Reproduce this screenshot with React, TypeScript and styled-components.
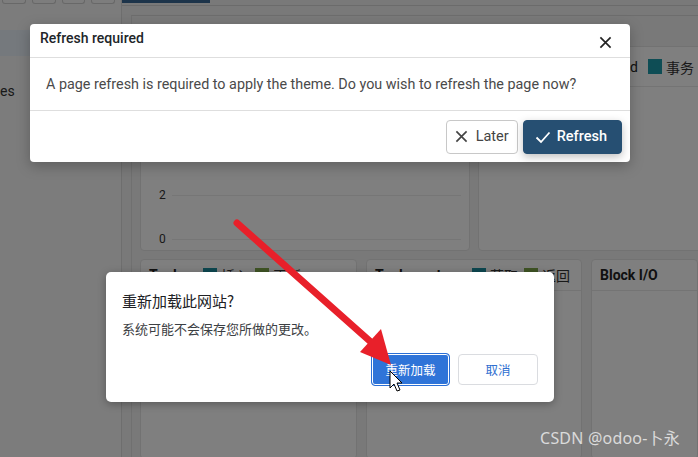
import React from "react";
import styled, { createGlobalStyle } from "styled-components";

const Global = createGlobalStyle`
  html, body { margin: 0; padding: 0; }
  body { font-family: Roboto, "Noto Sans", sans-serif; background: #7c7c7c; }
`;

const Screen = styled.div`
  position: relative;
  width: 698px;
  height: 457px;
  overflow: hidden;
  display: flex;
  background: #f2f2f2;
`;

const Sidebar = styled.aside`
  width: 121px;
  flex-shrink: 0;
  background: #f8f8f8;
  border-right: 1px solid #dcdcdc;
  display: flex;
  flex-direction: column;
`;

const TabRow = styled.div`
  display: flex;
  gap: 6px;
  padding: 0 6px 0 2px;
  height: 30px;
`;

const TabStub = styled.div`
  width: 23px;
  height: 3px;
  border: 1px solid #d0d0d0;
  border-top: none;
  border-radius: 0 0 3px 3px;
  background: #fafafa;
`;

const NavItem = styled.div<{ active?: boolean }>`
  height: ${(p) => (p.active ? 26 : 42)}px;
  display: flex;
  align-items: flex-end;
  font-size: 14px;
  color: #333;
  background: ${(p) => (p.active ? "#eaf3fb" : "transparent")};
  line-height: 1;
`;

const Main = styled.main`
  flex: 1;
  display: flex;
  flex-direction: column;
  min-width: 0;
`;

const TopStrip = styled.div`
  height: 5px;
  flex-shrink: 0;
  border-bottom: 1px solid #d6d6d6;
  display: flex;
`;

const ActiveTab = styled.div`
  width: 88px;
  height: 3px;
  background: #3b6894;
`;

const Content = styled.div`
  flex: 1;
  padding: 9px 0 0 9px;
  display: flex;
  min-width: 0;
`;

const Board = styled.div`
  flex: 1;
  min-width: 0;
  border-left: 1px solid #e0e0e0;
  border-top: 1px solid #dadada;
  padding: 30px 0 0 8px;
  display: flex;
  flex-direction: column;
  gap: 8px;
`;

const BoardRow = styled.div<{ h: number; gap: number }>`
  height: ${(p) => p.h}px;
  flex-shrink: 0;
  display: flex;
  gap: ${(p) => p.gap}px;
`;

const Panel = styled.section<{ w?: number }>`
  ${(p) => (p.w ? `width: ${p.w}px; flex-shrink: 0;` : "flex: 1; min-width: 0;")}
  box-sizing: border-box;
  background: #ffffff;
  border: 1px solid #e4e4e4;
  border-radius: 4px;
  display: flex;
  flex-direction: column;
  overflow: hidden;
`;

const PanelHead = styled.div<{ h?: number }>`
  height: ${(p) => p.h ?? 30}px;
  flex-shrink: 0;
  display: flex;
  align-items: center;
  gap: 4px;
  padding: 0 9px 0 8px;
  border-bottom: 1px solid #e8e8e8;
  white-space: nowrap;
  font-size: 14px;
  color: #222;
`;

const PanelTitle = styled.span<{ gapAfter?: number }>`
  font-weight: 700;
  margin-right: ${(p) => (p.gapAfter !== undefined ? `${p.gapAfter}px` : "auto")};
`;

const Swatch = styled.span<{ color: string }>`
  width: 14px;
  height: 15px;
  flex-shrink: 0;
  background: ${(p) => p.color};
  display: inline-block;
`;

const LegendText = styled.span`
  font-family: "Noto Sans CJK SC", sans-serif;
  font-size: 14px;
  color: #333;
  margin-right: 2px;
`;

const Chart = styled.div`
  flex: 1;
  display: flex;
  flex-direction: column;
  justify-content: flex-end;
  gap: 30px;
  padding: 0 8px 4px 18px;
`;

const Tick = styled.div`
  display: flex;
  align-items: center;
  gap: 6px;
  font-size: 12px;
  color: #333;
  &::after {
    content: "";
    flex: 1;
    height: 1px;
    background: #ececec;
  }
`;

const Backdrop = styled.div`
  position: absolute;
  inset: 0;
  background: rgba(0, 0, 0, 0.5);
`;

const Modal = styled.div`
  position: absolute;
  left: 30px;
  top: 24px;
  width: 600px;
  background: #fff;
  border-radius: 4px;
  box-shadow: 0 4px 14px rgba(0, 0, 0, 0.25);
  font-family: Roboto, sans-serif;
`;

const ModalHead = styled.div`
  height: 34px;
  box-sizing: border-box;
  display: flex;
  align-items: flex-start;
  justify-content: space-between;
  padding: 6px 18px 0 10px;
  border-bottom: 1px solid #dedede;
`;

const ModalTitle = styled.h4`
  margin: 0;
  font-size: 14px;
  line-height: 17px;
  font-weight: 500;
  color: #212529;
`;

const CloseBtn = styled.button`
  border: 0;
  background: none;
  padding: 0;
  margin-top: 6px;
  display: flex;
  color: #222;
`;

const ModalBody = styled.div`
  height: 52px;
  display: flex;
  align-items: center;
  padding: 0 16px;
  font-size: 14.35px;
  color: #4a4a4a;
  border-bottom: 1px solid #dedede;
`;

const ModalFoot = styled.div`
  height: 51px;
  display: flex;
  align-items: center;
  justify-content: flex-end;
  gap: 5px;
  padding: 0 8px;
`;

const FootBtn = styled.button<{ primary?: boolean }>`
  height: 34px;
  display: flex;
  align-items: center;
  justify-content: center;
  gap: ${(p) => (p.primary ? 6 : 8)}px;
  padding: 0 ${(p) => (p.primary ? 14 : 8)}px 0 ${(p) => (p.primary ? 11 : 8)}px;
  border-radius: 4px;
  font-family: Roboto, sans-serif;
  font-size: 14.5px;
  font-weight: ${(p) => (p.primary ? 500 : 400)};
  color: ${(p) => (p.primary ? "#fff" : "#444")};
  background: ${(p) => (p.primary ? "#264f72" : "#fff")};
  border: 1px solid ${(p) => (p.primary ? "#264f72" : "#c8c8c8")};
  box-shadow: ${(p) => (p.primary ? "0 3px 8px rgba(0,0,0,0.25)" : "none")};
`;

const Prompt = styled.div`
  position: absolute;
  left: 106px;
  top: 272px;
  width: 448px;
  height: 130px;
  box-sizing: border-box;
  background: #fff;
  border-radius: 5px;
  box-shadow: 0 2px 8px rgba(0, 0, 0, 0.3);
  padding: 19px 16px 0 16px;
  font-family: "Noto Sans CJK SC", "Noto Sans", sans-serif;
  display: flex;
  flex-direction: column;
`;

const PromptTitle = styled.div`
  font-size: 15px;
  line-height: 20px;
  color: #202124;
`;

const PromptText = styled.div`
  margin-top: 9px;
  font-size: 13px;
  line-height: 17px;
  color: #3c4043;
`;

const PromptActions = styled.div`
  margin-top: 16px;
  display: flex;
  justify-content: flex-end;
  align-items: center;
  gap: 8px;
`;

const ChromeBtn = styled.button<{ primary?: boolean }>`
  width: ${(p) => (p.primary ? 79 : 80)}px;
  height: ${(p) => (p.primary ? 33 : 31)}px;
  border-radius: 4px;
  font-family: "Noto Sans CJK SC", sans-serif;
  font-size: 12.5px;
  color: ${(p) => (p.primary ? "#fff" : "#2f6fd0")};
  background: ${(p) => (p.primary ? "#2f74d8" : "#fff")};
  border: 1px solid ${(p) => (p.primary ? "#2a6fd6" : "#dadce0")};
  box-shadow: ${(p) => (p.primary ? "inset 0 0 0 1px #fff" : "none")};
`;

const Annotation = styled.svg`
  position: absolute;
  inset: 0;
  pointer-events: none;
`;

const Watermark = styled.div`
  position: absolute;
  right: 18px;
  bottom: 8px;
  font-family: "Noto Sans", "Noto Sans CJK SC", sans-serif;
  font-size: 16px;
  color: rgba(255, 255, 255, 0.72);
  letter-spacing: 0.2px;
`;

const XIcon = ({ size = 14 }: { size?: number }) => (
  <svg width={size} height={size} viewBox="0 0 14 14">
    <path d="M1.5 1.5 L12.5 12.5 M12.5 1.5 L1.5 12.5" stroke="currentColor" strokeWidth="1.8" fill="none" />
  </svg>
);

const CheckIcon = () => (
  <svg width="16" height="14" viewBox="0 0 16 14">
    <path d="M1.5 7.5 L6 12 L14.5 2.5" stroke="currentColor" strokeWidth="1.8" fill="none" />
  </svg>
);

export default function App() {
  return (
    <>
      <Global />
      <Screen>
        <Sidebar>
          <TabRow>
            <TabStub />
            <TabStub />
            <TabStub />
            <TabStub />
          </TabRow>
          <NavItem active />
          <NavItem>es</NavItem>
        </Sidebar>
        <Main>
          <TopStrip>
            <ActiveTab />
          </TopStrip>
          <Content>
            <Board>
              <BoardRow h={205} gap={8}>
                <Panel w={330}>
                  <PanelHead>
                    <PanelTitle>Sessions</PanelTitle>
                  </PanelHead>
                  <Chart>
                    <Tick>2</Tick>
                    <Tick>0</Tick>
                  </Chart>
                </Panel>
                <Panel w={228}>
                  <PanelHead h={39}>
                    <PanelTitle>Transactions</PanelTitle>
                    <span>Backend</span>
                    <Swatch color="#1c9aab" style={{ marginLeft: 6 }} />
                    <LegendText>事务</LegendText>
                  </PanelHead>
                </Panel>
              </BoardRow>
              <BoardRow h={200} gap={9}>
                <Panel w={217}>
                  <PanelHead>
                    <PanelTitle gapAfter={8}>Tuples</PanelTitle>
                    <Swatch color="#1a8fa0" />
                    <LegendText>插入</LegendText>
                    <Swatch color="#7fa84a" />
                    <LegendText>更新</LegendText>
                  </PanelHead>
                </Panel>
                <Panel w={216}>
                  <PanelHead>
                    <PanelTitle>Tuples out</PanelTitle>
                    <Swatch color="#1a8fa0" />
                    <LegendText>获取</LegendText>
                    <Swatch color="#7fa84a" />
                    <LegendText>返回</LegendText>
                  </PanelHead>
                </Panel>
                <Panel>
                  <PanelHead>
                    <PanelTitle>Block I/O</PanelTitle>
                  </PanelHead>
                </Panel>
              </BoardRow>
            </Board>
          </Content>
        </Main>

        <Backdrop />

        <Modal>
          <ModalHead>
            <ModalTitle>Refresh required</ModalTitle>
            <CloseBtn>
              <XIcon size={13} />
            </CloseBtn>
          </ModalHead>
          <ModalBody>A page refresh is required to apply the theme. Do you wish to refresh the page now?</ModalBody>
          <ModalFoot>
            <FootBtn>
              <XIcon size={13} />
              Later
            </FootBtn>
            <FootBtn primary>
              <CheckIcon />
              Refresh
            </FootBtn>
          </ModalFoot>
        </Modal>

        <Prompt>
          <PromptTitle>重新加载此网站?</PromptTitle>
          <PromptText>系统可能不会保存您所做的更改。</PromptText>
          <PromptActions>
            <ChromeBtn primary>重新加载</ChromeBtn>
            <ChromeBtn>取消</ChromeBtn>
          </PromptActions>
        </Prompt>

        <Annotation width="698" height="457" viewBox="0 0 698 457">
          <line x1="237" y1="223" x2="372" y2="343" stroke="#e8202a" strokeWidth="7" strokeLinecap="round" />
          <polygon points="391,365 360,352 381,329" fill="#e8202a" />
          <path
            d="M390 371 L390 388 L394 384 L397 391 L400 390 L397 383 L402 383 Z"
            fill="#fff"
            stroke="#000"
            strokeWidth="1"
            strokeLinejoin="round"
          />
        </Annotation>

        <Watermark>CSDN @odoo-卜永</Watermark>
      </Screen>
    </>
  );
}
